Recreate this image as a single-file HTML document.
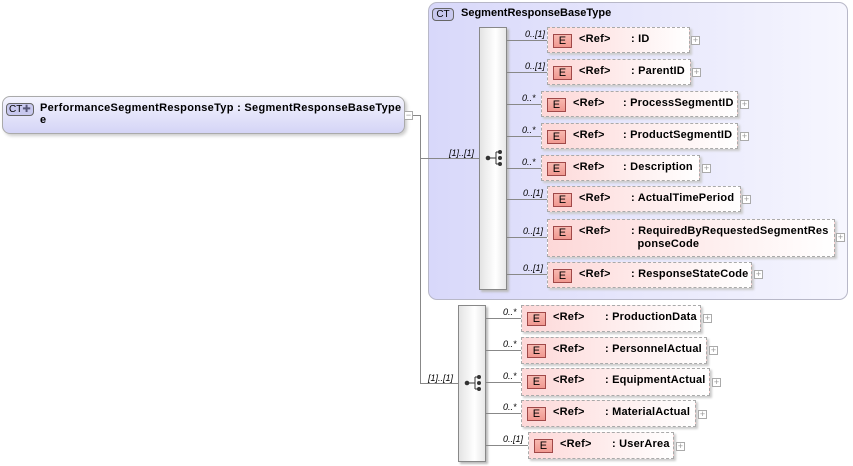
<!DOCTYPE html>
<html><head><meta charset="utf-8"><style>
*{margin:0;padding:0;box-sizing:border-box}
body{width:853px;height:466px;background:#fff;position:relative;overflow:hidden;font-family:"Liberation Sans",Arial,sans-serif;font-size:11px;color:#000}
.a{position:absolute}
.panel{left:428px;top:2px;width:420px;height:298px;border:1px solid #b8b8c8;border-radius:9px;background:linear-gradient(90deg,#d8d8fa,#f6f6fe);}
.seq{position:absolute;width:28px;border:1px solid #888;background:linear-gradient(90deg,#e4e4e4,#fff 60%,#e8e8e8);box-shadow:2px 2px 2px #bbb}
.el{position:absolute;height:26px;border:1px dashed #aaa;background:linear-gradient(90deg,#fdd8d8,#fff);box-shadow:2px 2px 2px #ccc;font-weight:bold;letter-spacing:0.2px}
.el .E{position:absolute;left:5px;top:6px;width:19px;height:14px;border:1px solid #a04848;background:linear-gradient(#f8b8b0,#f09890);font-weight:normal;text-align:center;line-height:12px;font-size:11px}
.el .r{position:absolute;left:31px;top:5px}
.el .n{position:absolute;top:5px;line-height:13px}
.pl{position:absolute;width:9px;height:9px;border:1px solid #aaa;background:#fff;font-size:9px;line-height:7px;text-align:center;color:#999}
.h{position:absolute;height:1px;background:#888}
.v{position:absolute;width:1px;background:#888}
.m{position:absolute;font-style:italic;font-size:9px}
</style></head><body>
<div class="a" style="left:2px;top:96px;width:403px;height:38px;border:1px solid #aaa;border-radius:8px;background:linear-gradient(#f4f4fe,#d4d4f6);box-shadow:2px 2px 3px #ccc"></div>
<div class="a" style="left:6px;top:103px;width:28px;height:13px;border:1px solid #666;border-radius:4px;background:#c8c8ee;font-size:10px;line-height:11px;padding-left:2px">CT<span style="color:#557">✚</span></div>
<div class="a" style="left:40px;top:102px;font-weight:bold;line-height:12px;letter-spacing:0.3px">PerformanceSegmentResponseTyp : SegmentResponseBaseType<br>e</div>
<div class="pl" style="left:404px;top:111px">−</div>
<div class="h" style="left:413px;top:115px;width:8px"></div>
<div class="v" style="left:420px;top:115px;height:268px"></div>
<div class="h" style="left:420px;top:383px;width:38px"></div>
<div class="m" style="left:428px;top:373px">[1]..[1]</div>

<div class="a panel"></div>
<div class="h" style="left:420px;top:158px;width:60px"></div>
<div class="m" style="left:449px;top:148px">[1]..[1]</div>
<div class="a" style="left:432px;top:8px;width:22px;height:13px;border:1px solid #666;border-radius:4px;background:#c8c8ee;font-size:10px;line-height:11px;text-align:center">CT</div>
<div class="a" style="left:461px;top:7px;font-weight:bold">SegmentResponseBaseType</div>

<div class="seq" style="left:479px;top:27px;height:263px"></div>
<svg class="a" style="left:484px;top:150px" width="20" height="18"><line x1="4" y1="8" x2="12" y2="8" stroke="#333"/><line x1="12" y1="2" x2="12" y2="14" stroke="#333"/><line x1="12" y1="2" x2="16" y2="2" stroke="#333"/><line x1="12" y1="14" x2="16" y2="14" stroke="#333"/><circle cx="4" cy="8" r="2.3" fill="#333"/><circle cx="16" cy="2" r="2" fill="#333"/><circle cx="16" cy="8" r="2" fill="#333"/><circle cx="16" cy="14" r="2" fill="#333"/></svg>

<div class="seq" style="left:458px;top:305px;height:157px"></div>
<svg class="a" style="left:463px;top:375px" width="20" height="18"><line x1="4" y1="8" x2="12" y2="8" stroke="#333"/><line x1="12" y1="2" x2="12" y2="14" stroke="#333"/><line x1="12" y1="2" x2="16" y2="2" stroke="#333"/><line x1="12" y1="14" x2="16" y2="14" stroke="#333"/><circle cx="4" cy="8" r="2.3" fill="#333"/><circle cx="16" cy="2" r="2" fill="#333"/><circle cx="16" cy="8" r="2" fill="#333"/><circle cx="16" cy="14" r="2" fill="#333"/></svg>

<div class="h" style="left:507px;top:40px;width:40px"></div><div class="m" style="left:525px;top:29px">0..[1]</div>
<div class="el" style="left:547px;top:27px;width:143px"><div class="E">E</div><span class="r">&lt;Ref&gt;</span><span class="n" style="left:83px">: ID</span></div><div class="pl" style="left:691px;top:36px">+</div>

<div class="h" style="left:507px;top:72px;width:40px"></div><div class="m" style="left:525px;top:61px">0..[1]</div>
<div class="el" style="left:547px;top:59px;width:144px"><div class="E">E</div><span class="r">&lt;Ref&gt;</span><span class="n" style="left:83px">: ParentID</span></div><div class="pl" style="left:692px;top:68px">+</div>

<div class="h" style="left:507px;top:104px;width:34px"></div><div class="m" style="left:522px;top:93px">0..*</div>
<div class="el" style="left:541px;top:91px;width:197px"><div class="E">E</div><span class="r">&lt;Ref&gt;</span><span class="n" style="left:81px">: ProcessSegmentID</span></div><div class="pl" style="left:740px;top:100px">+</div>

<div class="h" style="left:507px;top:136px;width:34px"></div><div class="m" style="left:522px;top:125px">0..*</div>
<div class="el" style="left:541px;top:123px;width:197px"><div class="E">E</div><span class="r">&lt;Ref&gt;</span><span class="n" style="left:81px">: ProductSegmentID</span></div><div class="pl" style="left:740px;top:132px">+</div>

<div class="h" style="left:507px;top:168px;width:34px"></div><div class="m" style="left:522px;top:157px">0..*</div>
<div class="el" style="left:541px;top:155px;width:159px"><div class="E">E</div><span class="r">&lt;Ref&gt;</span><span class="n" style="left:81px">: Description</span></div><div class="pl" style="left:702px;top:164px">+</div>

<div class="h" style="left:507px;top:199px;width:40px"></div><div class="m" style="left:523px;top:188px">0..[1]</div>
<div class="el" style="left:547px;top:186px;width:194px"><div class="E">E</div><span class="r">&lt;Ref&gt;</span><span class="n" style="left:83px">: ActualTimePeriod</span></div><div class="pl" style="left:742px;top:195px">+</div>

<div class="h" style="left:507px;top:237px;width:40px"></div><div class="m" style="left:523px;top:226px">0..[1]</div>
<div class="el" style="left:547px;top:219px;width:288px;height:38px"><div class="E">E</div><span class="r">&lt;Ref&gt;</span><span class="n" style="left:83px">: RequiredByRequestedSegmentRes<br>&nbsp;&nbsp;ponseCode</span></div><div class="pl" style="left:836px;top:233px">+</div>

<div class="h" style="left:507px;top:274px;width:40px"></div><div class="m" style="left:523px;top:263px">0..[1]</div>
<div class="el" style="left:547px;top:262px;width:205px"><div class="E">E</div><span class="r">&lt;Ref&gt;</span><span class="n" style="left:83px">: ResponseStateCode</span></div><div class="pl" style="left:754px;top:270px">+</div>

<div class="h" style="left:486px;top:318px;width:35px"></div><div class="m" style="left:503px;top:307px">0..*</div>
<div class="el" style="left:521px;top:305px;width:180px;height:27px"><div class="E">E</div><span class="r">&lt;Ref&gt;</span><span class="n" style="left:83px">: ProductionData</span></div><div class="pl" style="left:703px;top:314px">+</div>

<div class="h" style="left:486px;top:350px;width:35px"></div><div class="m" style="left:503px;top:339px">0..*</div>
<div class="el" style="left:521px;top:337px;width:186px;height:27px"><div class="E">E</div><span class="r">&lt;Ref&gt;</span><span class="n" style="left:83px">: PersonnelActual</span></div><div class="pl" style="left:709px;top:346px">+</div>

<div class="h" style="left:486px;top:382px;width:35px"></div><div class="m" style="left:503px;top:371px">0..*</div>
<div class="el" style="left:521px;top:368px;width:189px;height:28px"><div class="E">E</div><span class="r">&lt;Ref&gt;</span><span class="n" style="left:83px">: EquipmentActual</span></div><div class="pl" style="left:712px;top:378px">+</div>

<div class="h" style="left:486px;top:413px;width:35px"></div><div class="m" style="left:503px;top:402px">0..*</div>
<div class="el" style="left:521px;top:400px;width:175px;height:27px"><div class="E">E</div><span class="r">&lt;Ref&gt;</span><span class="n" style="left:83px">: MaterialActual</span></div><div class="pl" style="left:698px;top:410px">+</div>

<div class="h" style="left:486px;top:445px;width:42px"></div><div class="m" style="left:503px;top:434px">0..[1]</div>
<div class="el" style="left:528px;top:432px;width:146px;height:27px"><div class="E">E</div><span class="r">&lt;Ref&gt;</span><span class="n" style="left:83px">: UserArea</span></div><div class="pl" style="left:676px;top:442px">+</div>
</body></html>
